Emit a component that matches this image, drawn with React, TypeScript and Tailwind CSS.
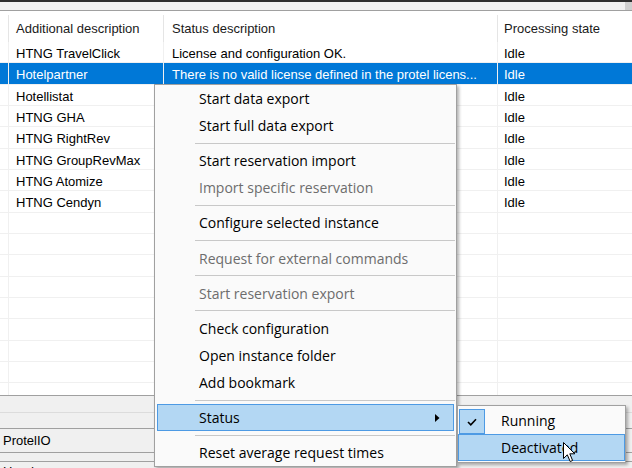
import React from "react"

interface GridRow {
  extra: string
  status: string
  state: string
  selected?: boolean
}

type MenuEntry = { label: string; disabled?: boolean; active?: boolean; arrow?: boolean } | "sep"

const rows: GridRow[] = [
  { extra: "HTNG TravelClick", status: "License and configuration OK.", state: "Idle" },
  {
    extra: "Hotelpartner",
    status: "There is no valid license defined in the protel licens...",
    state: "Idle",
    selected: true,
  },
  { extra: "Hotellistat", status: "", state: "Idle" },
  { extra: "HTNG GHA", status: "", state: "Idle" },
  { extra: "HTNG RightRev", status: "", state: "Idle" },
  { extra: "HTNG GroupRevMax", status: "", state: "Idle" },
  { extra: "HTNG Atomize", status: "", state: "Idle" },
  { extra: "HTNG Cendyn", status: "", state: "Idle" },
  ...Array.from({ length: 9 }, () => ({ extra: "", status: "", state: "" })),
]

const menu: MenuEntry[] = [
  { label: "Start data export" },
  { label: "Start full data export" },
  "sep",
  { label: "Start reservation import" },
  { label: "Import specific reservation", disabled: true },
  "sep",
  { label: "Configure selected instance" },
  "sep",
  { label: "Request for external commands", disabled: true },
  "sep",
  { label: "Start reservation export", disabled: true },
  "sep",
  { label: "Check configuration" },
  { label: "Open instance folder" },
  { label: "Add bookmark" },
  "sep",
  { label: "Status", active: true, arrow: true },
  "sep",
  { label: "Reset average request times" },
]

const cell = "flex h-full items-center truncate whitespace-nowrap border-r border-[#f0f0f0] pt-[2px]"

function Cursor() {
  return (
    <svg className="absolute left-[563px] top-[442px]" width="13" height="21" viewBox="0 0 13 21">
      <path
        d="M0.5 0.5 L0.5 16.5 L4.3 12.8 L7.2 19.5 L9.6 18.5 L6.8 11.8 L11.8 11.8 Z"
        fill="#fff"
        stroke="#000"
        strokeWidth="1"
      />
    </svg>
  )
}

export default function App() {
  return (
    <div className="relative h-[468px] w-[632px] overflow-hidden bg-[#f0f0f0] font-['Liberation_Sans',Arial,sans-serif] text-[13px] text-black">
      <div className="h-[2px] bg-[#2d2d2d]" />
      <div className="flex h-[9px] justify-end border-b border-[#a0a0a0] bg-[#f0f0f0]">
        <div className="w-[7px] bg-[#cfcfcf]" />
      </div>

      <div className="bg-white">
        <div className="grid h-[31px] grid-cols-[9px_155px_334px_1fr] pt-[4px] text-[#1a1a1a]">
          <div className="h-full border-r border-[#e5e5e5]" />
          <div className="flex h-full items-center border-r border-[#e5e5e5] pl-[7px]">Additional description</div>
          <div className="flex h-full items-center border-r border-[#e5e5e5] pl-[8px]">Status description</div>
          <div className="flex h-full items-center pl-[6px]">Processing state</div>
        </div>
        <div className="h-[354px] overflow-hidden border-b border-[#a0a0a0]">
          {rows.map((row, i) => (
            <div
              key={i}
              className={`grid h-[21.33px] grid-cols-[9px_155px_334px_1fr] border-b border-[#f0f0f0] ${
                row.selected ? "bg-[#0078d7] text-white" : "bg-white"
              }`}
            >
              <div className={cell} />
              <div className={`${cell} pl-[7px]`}>{row.extra}</div>
              <div className={`${cell} pl-[8px]`}>{row.status}</div>
              <div className="flex h-full items-center pl-[6px] pt-[2px]">{row.state}</div>
            </div>
          ))}
        </div>
      </div>

      <div className="h-[17px] border-b border-[#dcdcdc]" />
      <div className="h-[16px] border-b border-[#a0a0a0]" />
      <div className="flex h-[24px] items-center border-b border-[#a0a0a0] pl-[3px]">ProtelIO</div>
      <div className="h-[9px] border-b border-[#a0a0a0]" />
      <div className="pl-[3px] pt-[2px] leading-[16px]">Header</div>

      <div className="absolute left-[154px] top-[84px] w-[303px] border border-[#a0a0a0] bg-[#fafafa] font-['Open_Sans','Noto_Sans',sans-serif] text-[14px] shadow-[2px_2px_3px_rgba(0,0,0,0.3)]">
        {menu.map((entry, i) =>
          entry === "sep" ? (
            <div key={i} className="flex h-[8.2px] items-center pl-[40px] pr-[1px]">
              <div className="h-px w-full bg-[#c8c8c8]" />
            </div>
          ) : (
            <div
              key={i}
              className={`mx-[2px] flex h-[27px] items-center border pl-[41px] pr-[13px] ${
                entry.active ? "border-[#4d9ae4] bg-[#b3d7f3]" : "border-transparent"
              } ${entry.disabled ? "text-[#6d6d6d]" : "text-black"}`}
            >
              <span className="flex-1">{entry.label}</span>
              {entry.arrow && (
                <svg width="5" height="8" viewBox="0 0 5 8">
                  <path d="M0 0 L4.5 4 L0 8 Z" fill="#000" />
                </svg>
              )}
            </div>
          )
        )}
      </div>

      <div className="absolute left-[457px] top-[405px] w-[169px] border border-[#a0a0a0] bg-[#fafafa] py-[1px] font-['Open_Sans','Noto_Sans',sans-serif] text-[14px] shadow-[2px_2px_3px_rgba(0,0,0,0.3)]">
        <div className="relative flex h-[27px] items-center border border-transparent pl-[42px]">
          <div className="absolute left-[0px] top-[1px] flex h-[25px] w-[26px] items-center justify-center border border-[#4d9ae4] bg-[#b3d7f3]">
            <svg width="10" height="8" viewBox="0 0 10 8">
              <path d="M1 4 L3.8 6.8 L9 1.2" fill="none" stroke="#000" strokeWidth="1.6" />
            </svg>
          </div>
          Running
        </div>
        <div className="flex h-[27px] items-center border border-[#4d9ae4] bg-[#b3d7f3] pl-[42px]">Deactivated</div>
      </div>

      <Cursor />
    </div>
  )
}
